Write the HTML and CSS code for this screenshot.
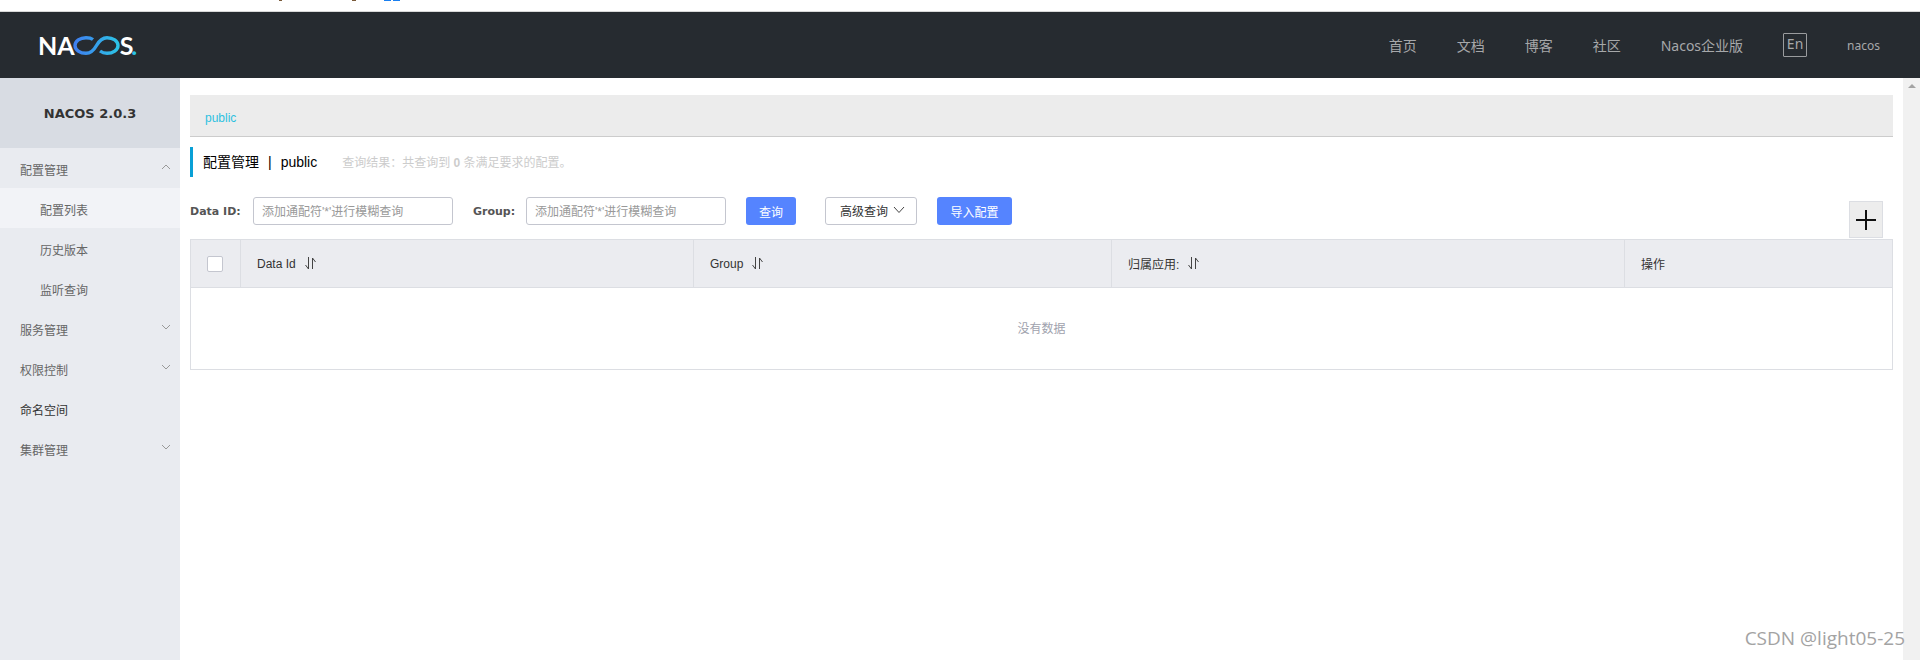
FILE: index.html
```html
<!DOCTYPE html>
<html lang="zh-CN">
    <head>
        <meta charset="UTF-8" />
        <title>Nacos</title>
        <link rel="stylesheet" href="styles.css">
    </head>
    <body>
        <div class="top-strip">
            <span class="bit bit-a"></span>
            <span class="bit bit-b"></span>
            <span class="bit bit-c"></span>
            <span class="bit bit-c"></span>
        </div>
        <header class="header">
            <div class="logo">
                <span>NA</span>
                <svg class="logo-mark" width="47" height="19" viewBox="0 0 47 19">
                    <defs>
                        <linearGradient id="mark" x1="0" y1="0" x2="1" y2="0">
                            <stop offset="0" stop-color="#3f7ff0" />
                            <stop offset="1" stop-color="#2cc3e6" />
                        </linearGradient>
                    </defs>
                    <path d="M20 3.500C18 2 15.500 1.700 13 1.700 7 1.700 2 5 2 9.500S7 17.300 13 17.300C18 17.300 21 14 23.500 9.500S29 1.700 34 1.700C40 1.700 45 5 45 9.500S40 17.300 34 17.300C31 17.300 29 16.500 27 15" fill="none" stroke="url(#mark)" stroke-width="3.400" />
                </svg>
                <span>S</span><span class="logo-dot">.</span>
            </div>
            <nav class="nav">
                <a>首页</a>
                <a>文档</a>
                <a>博客</a>
                <a>社区</a>
                <a>Nacos企业版</a>
                <span class="lang">En</span>
                <span class="user">nacos</span>
            </nav>
        </header>
        <div class="layout">
            <aside class="sidebar">
                <div class="version">NACOS 2.0.3</div>
                <div class="menu-item">配置管理<svg class="arrow" width="10" height="6" viewBox="0 0 10 6"><path d="M1 5l4-4 4 4" /></svg></div>
                <div class="sub-item active">配置列表</div>
                <div class="sub-item">历史版本</div>
                <div class="sub-item">监听查询</div>
                <div class="menu-item">服务管理<svg class="arrow" width="10" height="6" viewBox="0 0 10 6"><path d="M1 1l4 4 4-4" /></svg></div>
                <div class="menu-item">权限控制<svg class="arrow" width="10" height="6" viewBox="0 0 10 6"><path d="M1 1l4 4 4-4" /></svg></div>
                <div class="menu-item plain">命名空间</div>
                <div class="menu-item">集群管理<svg class="arrow" width="10" height="6" viewBox="0 0 10 6"><path d="M1 1l4 4 4-4" /></svg></div>
            </aside>
            <main class="main">
                <div class="ns-bar"><span class="ns-link">public</span></div>
                <div class="page-title">
                    <span class="title-text">配置管理<span class="title-sep">|</span>public</span>
                    <span class="title-hint">查询结果：共查询到 <b>0</b> 条满足要求的配置。</span>
                </div>
                <div class="filters">
                    <label class="filter-label">Data ID:</label>
                    <input class="filter-input" placeholder="添加通配符'*'进行模糊查询">
                    <label class="filter-label group-label">Group:</label>
                    <input class="filter-input" placeholder="添加通配符'*'进行模糊查询">
                    <button class="btn btn-primary btn-search">查询</button>
                    <button class="btn btn-plain">高级查询<svg width="12" height="8" viewBox="0 0 12 8"><path d="M1 1l5 5.500 5-5.500" /></svg></button>
                    <button class="btn btn-primary btn-import">导入配置</button>
                    <div class="add-box">
                        <svg width="20" height="20" viewBox="0 0 20 20"><path d="M10 0v20M0 10h20" /></svg>
                    </div>
                </div>
                <div class="table">
                    <div class="table-head">
                        <div class="cell cell-check"><span class="checkbox"></span></div>
                        <div class="cell cell-id">Data Id<svg class="sort" width="12" height="12" viewBox="0 0 12 12"><path d="M3.500 0v12L.5 8M7.500 12V1l3 4" /></svg></div>
                        <div class="cell cell-group">Group<svg class="sort" width="12" height="12" viewBox="0 0 12 12"><path d="M3.500 0v12L.5 8M7.500 12V1l3 4" /></svg></div>
                        <div class="cell cell-app">归属应用:<svg class="sort" width="12" height="12" viewBox="0 0 12 12"><path d="M3.500 0v12L.5 8M7.500 12V1l3 4" /></svg></div>
                        <div class="cell cell-op">操作</div>
                    </div>
                    <div class="table-empty">没有数据</div>
                </div>
            </main>
            <div class="scrollbar"><span class="scroll-up"></span></div>
        </div>
        <div class="watermark">CSDN @light05-25</div>
    </body>
</html>
```

FILE: styles.css
```css
* {
    box-sizing: border-box;
}

body {
    margin: 0;
    height: 660px;
    overflow: hidden;
    position: relative;
    background: #fff;
    color: #333;
    font-family: "Liberation Sans", "Noto Sans CJK SC", sans-serif;
    font-size: 12px;
}

.top-strip {
    display: flex;
    height: 12px;
    padding-left: 279px;
    background: #fff;
    border-bottom: 1px solid #d8d8d8;
}

.bit {
    height: 1px;
}

.bit-a {
    width: 3px;
    background: #7a5a3a;
}

.bit-b {
    width: 4px;
    margin: 0 28px 0 70px;
    background: #7a5a3a;
}

.bit-c {
    width: 7px;
    margin-right: 2px;
    background: #1a7ff0;
}

.header {
    display: flex;
    align-items: center;
    justify-content: space-between;
    height: 66px;
    padding-left: 38px;
    background: #262b30;
}

.logo {
    display: flex;
    align-items: center;
    color: #fff;
    font-family: "Lato", sans-serif;
    font-size: 25px;
    font-weight: 700;
}

.logo-mark {
    margin: 0 0 0 -2px;
}

.logo-dot {
    margin-left: -2px;
    color: #2cc3e6;
}

.nav {
    display: flex;
    align-items: center;
    gap: 40px;
    padding-right: 40px;
    color: #a6a8aa;
    font-family: "Noto Sans", "Noto Sans CJK SC", sans-serif;
    font-size: 14px;
}

.lang {
    width: 24px;
    height: 24px;
    line-height: 20px;
    text-align: center;
    border: 1px solid #9a9c9e;
    border-radius: 1px;
}

.user {
    font-size: 12px;
}

.layout {
    display: flex;
    height: 582px;
}

.sidebar {
    width: 180px;
    flex-shrink: 0;
    background: #e9ebf0;
    color: #666;
}

.version {
    height: 70px;
    line-height: 72px;
    text-align: center;
    background: #d8dce3;
    color: #333;
    font-family: "DejaVu Sans", sans-serif;
    font-size: 13px;
    font-weight: 700;
}

.menu-item,
.sub-item {
    display: flex;
    align-items: center;
    justify-content: space-between;
    height: 40px;
    padding: 3px 9px 0 20px;
}

.menu-item.plain {
    color: #333;
}

.sub-item {
    padding-left: 40px;
}

.sub-item.active {
    background: #f2f3f7;
}

.arrow {
    margin-top: -6px;
    fill: none;
    stroke: #999;
}

.main {
    flex: 1;
    padding: 17px 10px 0;
    min-width: 0;
}

.ns-bar {
    height: 42px;
    padding: 16px 15px 0;
    background: #ececec;
    border-bottom: 1px solid #ccc;
}

.ns-link {
    color: #2ec1e0;
}

.page-title {
    display: flex;
    align-items: center;
    height: 30px;
    margin-top: 10px;
    padding: 0 0 2px 10px;
    border-left: 3px solid #09a0d6;
}

.title-text {
    color: #000;
    font-size: 14px;
}

.title-sep {
    margin: 0 9px;
}

.title-hint {
    margin-left: 25px;
    color: #ccc;
}

.filters {
    display: flex;
    align-items: center;
    height: 28px;
    margin-top: 20px;
}

.filter-label {
    width: 63px;
    color: #555;
    font-family: "DejaVu Sans", sans-serif;
    font-size: 11px;
    font-weight: 700;
}

.group-label {
    width: 53px;
    margin-left: 20px;
}

.filter-input {
    width: 200px;
    height: 28px;
    padding: 1px 8px 0;
    border: 1px solid #c4c6cf;
    border-radius: 3px;
    outline: 0;
    font: inherit;
}

.filter-input::placeholder {
    color: #999;
}

.btn {
    height: 28px;
    padding: 0;
    border-radius: 3px;
    font: inherit;
}

.btn-primary {
    border: 0;
    color: #fff;
    background: #5584ff;
}

.btn-search {
    width: 50px;
    margin-left: 20px;
}

.btn-plain {
    display: flex;
    align-items: center;
    gap: 5px;
    width: 92px;
    margin-left: 29px;
    padding: 0 0 2px 14px;
    background: #fff;
    color: #333;
    border: 1px solid #c4c6cf;
}

.btn-plain svg {
    fill: none;
    stroke: #444;
}

.btn-import {
    width: 75px;
    margin-left: 20px;
}

.add-box {
    display: flex;
    align-items: center;
    justify-content: center;
    width: 34px;
    height: 37px;
    margin-left: auto;
    margin-right: 10px;
    margin-top: 17px;
    background: #ededed;
    border: 1px solid #dcdee3;
}

.add-box svg {
    fill: none;
    stroke: #111;
    stroke-width: 2;
}

.table {
    margin-top: 14px;
    height: 131px;
    border: 1px solid #dcdee3;
}

.table-head {
    display: flex;
    height: 48px;
    background: #ebecf0;
    border-bottom: 1px solid #dcdee3;
}

.cell {
    display: flex;
    align-items: center;
    padding-left: 16px;
    border-right: 1px solid #dcdee3;
}

.cell-check {
    width: 50px;
}

.checkbox {
    width: 16px;
    height: 16px;
    background: #fff;
    border: 1px solid #c4c6cf;
    border-radius: 2px;
}

.cell-id {
    width: 453px;
}

.cell-group {
    width: 418px;
}

.cell-app {
    width: 513px;
}

.cell-op {
    flex: 1;
    border-right: 0;
}

.sort {
    margin-left: 9px;
    margin-top: -2px;
    fill: none;
    stroke: #444;
}

.table-empty {
    height: 81px;
    line-height: 83px;
    text-align: center;
    color: #a0a2ad;
}

.scrollbar {
    width: 17px;
    flex-shrink: 0;
    background: #f1f1f1;
}

.scroll-up {
    display: block;
    width: 0;
    margin: 6px auto 0;
    border: 4px solid transparent;
    border-top: 0;
    border-bottom-color: #a3a3a3;
}

.watermark {
    position: absolute;
    right: 15px;
    bottom: 9px;
    color: #a3a3a3;
    font-family: "Open Sans", sans-serif;
    font-size: 19px;
}
```
